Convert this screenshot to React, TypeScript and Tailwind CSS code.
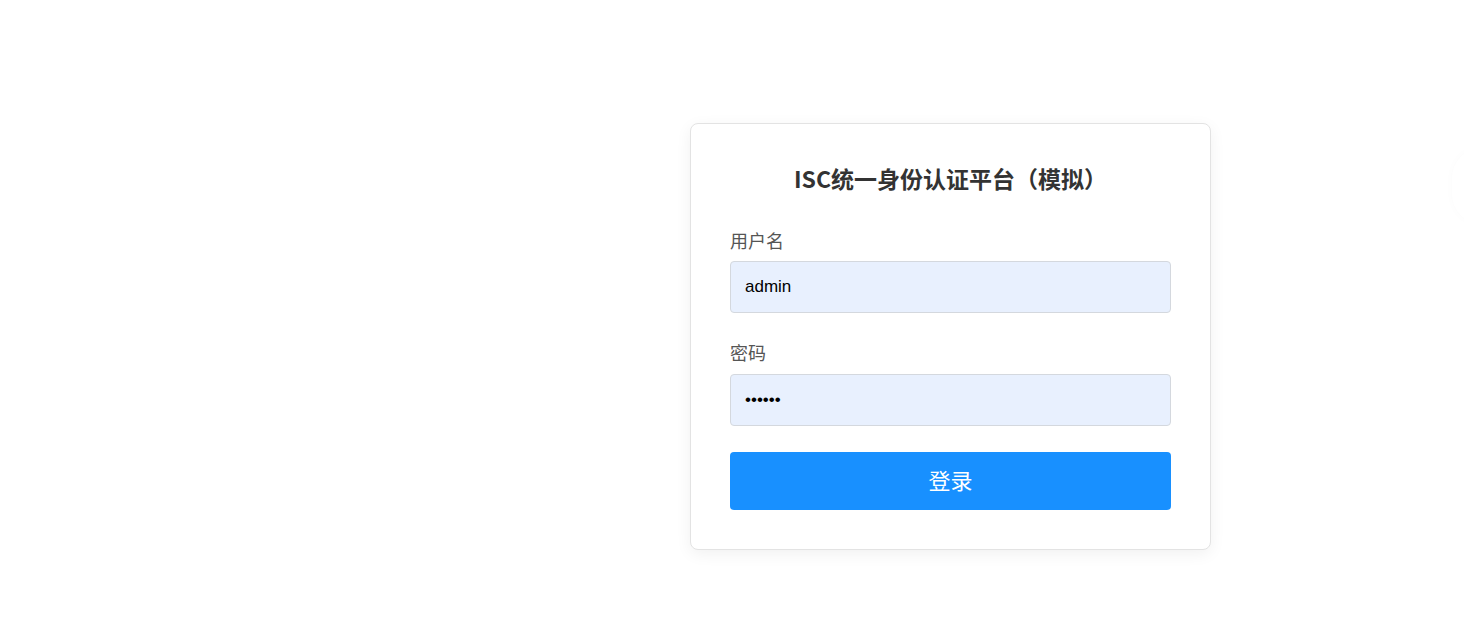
export default function App() {
  return (
    <div className="relative h-[630px] w-[1464px] overflow-hidden bg-white font-['Liberation_Sans','Noto_Sans_CJK_SC',sans-serif]">
      <div className="pl-[690px] pt-[123px]">
        <div className="w-[521px] rounded-lg border border-[#e3e3e3] bg-white px-[39px] pb-[39px] pt-[40px] shadow-[0_4px_16px_rgba(0,0,0,0.06)]">
          <h2 className="text-center font-['Noto_Sans_CJK_SC',sans-serif] text-[23px] font-bold leading-[28px] text-[#333]">
            ISC统一身份认证平台（模拟）
          </h2>

          <div className="mt-[36px]">
            <label className="block font-['Noto_Sans_CJK_SC',sans-serif] text-[18px] leading-[24px] text-[#555]">
              用户名
            </label>
            <input
              className="mt-[9px] block h-[52px] w-full rounded-[4px] border border-[#d4d8de] bg-[#e8f0fe] px-[14px] text-[17px] text-black outline-none"
              defaultValue="admin"
            />
          </div>

          <div className="mt-[27px]">
            <label className="block font-['Noto_Sans_CJK_SC',sans-serif] text-[18px] leading-[24px] text-[#555]">
              密码
            </label>
            <input
              type="password"
              className="mt-[10px] block h-[52px] w-full rounded-[4px] border border-[#d4d8de] bg-[#e8f0fe] px-[14px] text-[17px] text-black outline-none"
              defaultValue="123456"
            />
          </div>

          <button className="mt-[26px] block h-[58px] w-full rounded-[4px] bg-[#1890ff] pb-[3px] font-['Noto_Sans_CJK_SC',sans-serif] text-[22px] text-white">
            登录
          </button>
        </div>
      </div>

      <div className="absolute left-[1452px] top-[148px] h-[76px] w-[60px] rounded-full bg-white shadow-[0_0_10px_rgba(0,0,0,0.02)]" />
    </div>
  );
}
